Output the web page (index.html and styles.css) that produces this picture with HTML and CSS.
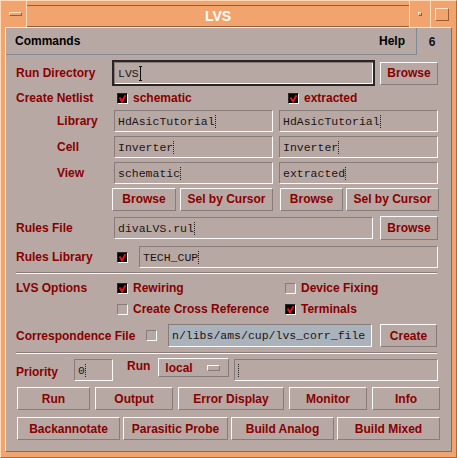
FILE: index.html
```html
<!DOCTYPE html>
<html>
<head>
<meta charset="utf-8">
<title>LVS</title>
<link rel="stylesheet" href="styles.css">
</head>
<body>
<div class="win">
  <div class="titlebar">
    <div class="tb-menu"><span class="tb-dash"></span></div>
    <div class="tb-title">LVS</div>
    <div class="tb-min"><span></span></div>
    <div class="tb-max"><span></span></div>
  </div>
  <div class="client">
    <div class="menurow">
      <div class="menubar"><span>Commands</span><span>Help</span></div>
      <div class="pagenum">6</div>
    </div>
    <div class="form">
      <div class="row r-dir">
        <div class="lbl lbl-dir">Run Directory</div>
        <div class="field focus f-dir">LVS<i class="caret solid"></i></div>
        <div class="btn b-browse">Browse</div>
      </div>
      <div class="row r-netlist">
        <div class="lbl lbl-cb">Create Netlist</div>
        <div class="opt opt-net"><span class="cb on"><svg viewBox="0 0 9 9" width="9" height="9"><polyline points="1.5,3.5 4,7.5 7.5,1.2" fill="none" stroke="#e8101c" stroke-width="2"/></svg></span><span class="lbl">schematic</span></div>
        <div class="opt"><span class="cb on"><svg viewBox="0 0 9 9" width="9" height="9"><polyline points="1.5,3.5 4,7.5 7.5,1.2" fill="none" stroke="#e8101c" stroke-width="2"/></svg></span><span class="lbl">extracted</span></div>
      </div>
      <div class="row r-lib">
        <div class="lbl lbl-sub">Library</div>
        <div class="field f-half">HdAsicTutorial<i class="caret"></i></div>
        <div class="field f-half f-right">HdAsicTutorial<i class="caret"></i></div>
      </div>
      <div class="row r-lib">
        <div class="lbl lbl-sub">Cell</div>
        <div class="field f-half">Inverter<i class="caret"></i></div>
        <div class="field f-half f-right">Inverter<i class="caret"></i></div>
      </div>
      <div class="row r-lib">
        <div class="lbl lbl-sub">View</div>
        <div class="field f-half">schematic<i class="caret"></i></div>
        <div class="field f-half f-right">extracted<i class="caret"></i></div>
      </div>
      <div class="row r-lib">
        <div class="lbl lbl-dir"></div>
        <div class="btn b-br1">Browse</div>
        <div class="btn b-sel1">Sel by Cursor</div>
        <div class="btn b-br2">Browse</div>
        <div class="btn b-sel2">Sel by Cursor</div>
      </div>
      <div class="row r-rules">
        <div class="lbl lbl-field">Rules File</div>
        <div class="field f-rules">divaLVS.rul<i class="caret"></i></div>
        <div class="btn b-browse b-rules">Browse</div>
      </div>
      <div class="row r-techlib">
        <div class="lbl lbl-cb">Rules Library</div>
        <span class="cb on"><svg viewBox="0 0 9 9" width="9" height="9"><polyline points="1.5,3.5 4,7.5 7.5,1.2" fill="none" stroke="#e8101c" stroke-width="2"/></svg></span>
        <div class="field f-tech">TECH_CUP<i class="caret"></i></div>
      </div>
      <div class="sep s1"></div>
      <div class="row r-opt1">
        <div class="lbl lbl-cb">LVS Options</div>
        <div class="opt opt-lvs"><span class="cb on"><svg viewBox="0 0 9 9" width="9" height="9"><polyline points="1.5,3.5 4,7.5 7.5,1.2" fill="none" stroke="#e8101c" stroke-width="2"/></svg></span><span class="lbl">Rewiring</span></div>
        <div class="opt"><span class="cb"></span><span class="lbl">Device Fixing</span></div>
      </div>
      <div class="row r-opt2">
        <div class="lbl lbl-cb"></div>
        <div class="opt opt-lvs"><span class="cb"></span><span class="lbl">Create Cross Reference</span></div>
        <div class="opt"><span class="cb on"><svg viewBox="0 0 9 9" width="9" height="9"><polyline points="1.5,3.5 4,7.5 7.5,1.2" fill="none" stroke="#e8101c" stroke-width="2"/></svg></span><span class="lbl">Terminals</span></div>
      </div>
      <div class="row r-corr">
        <div class="lbl lbl-corr">Correspondence File</div>
        <span class="cb"></span>
        <div class="field f-corr">n/libs/ams/cup/lvs_corr_file</div>
        <div class="btn b-create">Create</div>
      </div>
      <div class="sep s2"></div>
      <div class="row r-prio">
        <div class="lbl lbl-prio">Priority</div>
        <div class="field f-prio">0<i class="caret"></i></div>
        <div class="lbl lbl-run">Run</div>
        <div class="combo"><span>local</span><span class="combo-ind"></span></div>
        <div class="field f-host"><i class="caret"></i></div>
      </div>
      <div class="row btnrow r-b1">
        <div class="btn w-run">Run</div>
        <div class="btn w-out">Output</div>
        <div class="btn w-err">Error Display</div>
        <div class="btn w-mon">Monitor</div>
        <div class="btn w-info">Info</div>
      </div>
      <div class="row btnrow r-b2">
        <div class="btn w-back">Backannotate</div>
        <div class="btn w-para">Parasitic Probe</div>
        <div class="btn w-build">Build Analog</div>
        <div class="btn w-build">Build Mixed</div>
      </div>
    </div>
  </div>
</div>
</body>
</html>
```

FILE: styles.css
```css
* { box-sizing: border-box; margin: 0; padding: 0; }

html, body {
  width: 457px;
  height: 458px;
  overflow: hidden;
  background: #f2a46e;
  font-family: "Liberation Sans", Arial, sans-serif;
}

.win {
  width: 457px;
  height: 458px;
  display: flex;
  flex-direction: column;
  background: #f2a46e;
  border-top: 1px solid #ffd9b8;
  border-left: 1px solid #ffd9b8;
  border-right: 1px solid #a86a40;
  border-bottom: 1px solid #a86a40;
}

/* ---------- title bar ---------- */
.titlebar {
  height: 26px;
  display: flex;
  padding: 0 4px;
}
.tb-menu {
  width: 22px;
  border-right: 1px solid #ffdcc0;
  display: flex;
  align-items: center;
  justify-content: center;
}
.tb-dash {
  width: 13px;
  height: 4px;
  border: 1px solid;
  border-color: #ffe2c8 #9a5c34 #9a5c34 #ffe2c8;
}
.tb-title {
  flex: 1;
  margin-top: 4px;
  height: 22px;
  border-top: 1px solid #9a5c34;
  border-bottom: 1px solid #9a5c34;
  display: flex;
  align-items: center;
  justify-content: center;
  color: #ffffff;
  font-weight: bold;
  font-size: 14px;
}
.tb-min {
  width: 21px;
  border-left: 1px solid #ffdcc0;
  display: flex;
  align-items: center;
  justify-content: center;
}
.tb-min span {
  width: 4px;
  height: 4px;
  border: 1px solid;
  border-color: #ffe2c8 #9a5c34 #9a5c34 #ffe2c8;
}
.tb-max {
  width: 22px;
  border-left: 1px solid #ffdcc0;
  display: flex;
  align-items: center;
  justify-content: center;
}
.tb-max span {
  width: 14px;
  height: 13px;
  border: 1px solid;
  border-color: #ffe2c8 #9a5c34 #9a5c34 #ffe2c8;
}

/* ---------- client ---------- */
.client {
  flex: 1;
  margin: 0 4px 5px 4px;
  background: #b8a8a4;
  border-top: 1px solid #f4f0ee;
  border-left: 1px solid #f4f0ee;
  border-right: 1px solid #8a6a58;
  border-bottom: 1px solid #8a6a58;
  display: flex;
  flex-direction: column;
}

.menurow {
  display: flex;
  height: 27px;
}
.menubar {
  width: 411px;
  border-bottom: 1px solid #7f8a94;
  border-right: 1px solid #7f8a94;
  display: flex;
  align-items: center;
  justify-content: space-between;
  padding: 0 11px 0 9px;
  font-weight: bold;
  font-size: 12px;
  color: #000;
}
.pagenum {
  flex: 1;
  display: flex;
  align-items: center;
  justify-content: center;
  padding-right: 4px;
  font-weight: bold;
  font-size: 12px;
  color: #111;
}

.form {
  padding-left: 10px;
  display: flex;
  flex-direction: column;
}

.row {
  display: flex;
  align-items: center;
}

.lbl {
  color: #880000;
  font-weight: bold;
  font-size: 12px;
  white-space: nowrap;
}
.lbl-dir { width: 96px; }
.lbl-field { width: 98px; }
.lbl-cb { width: 101px; }
.lbl-sub { width: 98px; padding-left: 41px; }
.lbl-corr { width: 130px; }
.lbl-prio { width: 58px; padding-top: 3px; }
.lbl-run { margin: 0 8px 0 14px; align-self: flex-start; margin-top: 0; }

/* ---------- fields ---------- */
.field {
  height: 22px;
  border: 1px solid;
  border-color: #877c79 #fbfbfb #fbfbfb #877c79;
  padding-left: 3px;
  display: flex;
  align-items: center;
  font-family: "Liberation Mono", "Courier New", monospace;
  font-size: 11.5px;
  color: #1c1414;
  white-space: nowrap;
  overflow: hidden;
}
.field.focus {
  height: 26px;
  border: 2px solid #2a2626;
  box-shadow: inset 1px 1px #877c79, inset -1px -1px #fbfbfb;
  padding-left: 4px;
}
.caret {
  display: inline-block;
  width: 3px;
  height: 13px;
  margin-left: 0;
  border-left: 1px dotted #222;
}
.caret.solid {
  width: 4px;
  height: 15px;
  border-left: none;
  background:
    linear-gradient(#111, #111) 1px 0 / 1px 100% no-repeat,
    linear-gradient(#111, #111) 0 0 / 3px 1px no-repeat,
    linear-gradient(#111, #111) 0 100% / 3px 1px no-repeat;
}

.f-dir { width: 263px; }
.f-half { width: 159px; }
.f-right { margin-left: 6px; }
.f-rules { width: 259px; }
.f-tech { width: 299px; margin-left: 11px; }
.f-corr { width: 204px; height: 23px; margin-left: 11px; background: #aab3bc; }
.f-prio { width: 39px; }
.f-host { width: 204px; margin-left: 5px; }

/* ---------- buttons ---------- */
.btn {
  height: 23px;
  border: 1px solid;
  border-color: #fbfbfb #877c79 #877c79 #fbfbfb;
  display: flex;
  align-items: center;
  justify-content: center;
  color: #880000;
  font-weight: bold;
  font-size: 12px;
  white-space: nowrap;
}
.b-browse { width: 58px; margin-left: 5px; }
.b-rules { margin-left: 7px; height: 24px; }
.b-br1 { width: 64px; }
.b-sel1 { width: 93px; margin-left: 4px; }
.b-br2 { width: 63px; margin-left: 7px; }
.b-sel2 { width: 93px; margin-left: 3px; }
.b-create { width: 57px; margin-left: 8px; }

.combo {
  width: 71px;
  height: 19px;
  margin-top: -1px;
  align-self: flex-start;
  border: 1px solid;
  border-color: #fbfbfb #877c79 #877c79 #fbfbfb;
  display: flex;
  align-items: center;
  justify-content: space-between;
  padding: 0 8px 0 6px;
  color: #880000;
  font-weight: bold;
  font-size: 12px;
}
.combo-ind {
  width: 13px;
  height: 6px;
  border: 1px solid;
  border-color: #fbfbfb #877c79 #877c79 #fbfbfb;
}

/* ---------- checkboxes ---------- */
.cb {
  width: 11px;
  height: 11px;
  flex: none;
  border: 1px solid;
  border-color: #877c79 #fbfbfb #fbfbfb #877c79;
  display: flex;
  align-items: center;
  justify-content: center;
}
.cb.on {
  background: #000;
  border-color: #2a2a2a #fbfbfb #fbfbfb #2a2a2a;
}
.cb svg { display: block; }

.opt {
  display: flex;
  align-items: center;
  gap: 5px;
}
.opt-net { width: 171px; }
.opt-lvs { width: 168px; }

/* ---------- separators ---------- */
.sep {
  width: 421px;
  height: 2px;
  border-top: 1px solid #877c79;
  border-bottom: 1px solid #fbfbfb;
}

/* ---------- vertical rhythm ---------- */
.r-dir { margin-top: 5px; height: 26px; }
.r-netlist { margin-top: 4px; height: 16px; }
.r-lib { margin-top: 4px; height: 22px; }
.r-lib .btn { height: 23px; }
.r-rules { margin-top: 6px; height: 24px; }
.r-techlib { margin-top: 6px; height: 22px; }
.s1 { margin-top: 4px; }
.r-opt1 { margin-top: 6px; height: 16px; }
.r-opt2 { margin-top: 5px; height: 16px; }
.r-corr { margin-top: 7px; height: 23px; }
.s2 { margin-top: 5px; }
.r-prio { margin-top: 5px; height: 22px; }
.r-b1 { margin-top: 6px; height: 23px; }
.r-b2 { margin-top: 7px; height: 23px; }

.btnrow { padding-left: 1px; }
.r-b1 { gap: 5px; }
.r-b2 { gap: 3px; }
.w-run { width: 73px; }
.w-out { width: 78px; }
.w-err { width: 106px; }
.w-mon { width: 78px; }
.w-info { width: 68px; }
.w-back { width: 103px; }
.w-para { width: 105px; }
.w-build { width: 103px; }
```
